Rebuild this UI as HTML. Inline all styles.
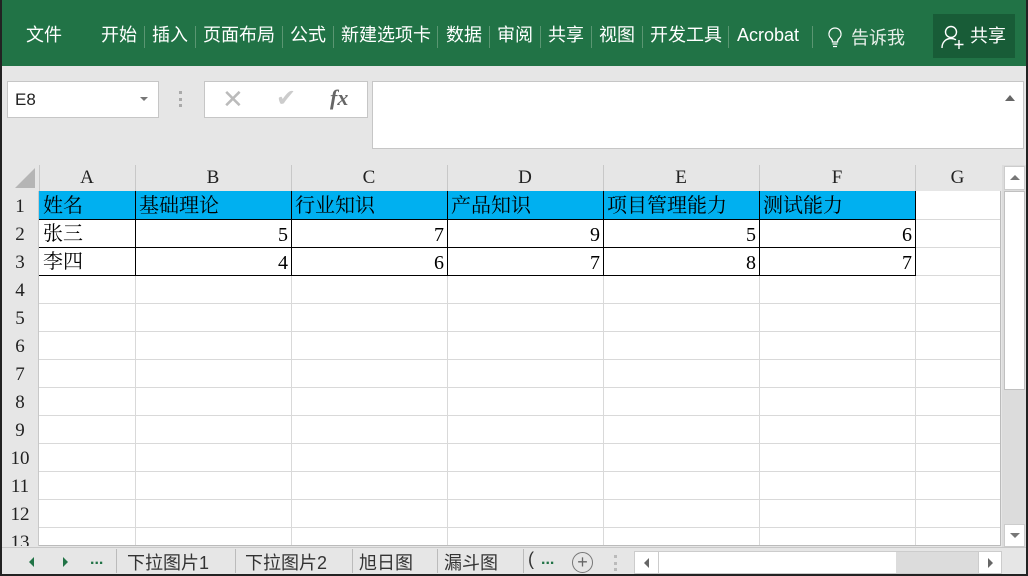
<!DOCTYPE html>
<html><head><meta charset="utf-8"><style>
*{margin:0;padding:0;box-sizing:border-box}
body{width:1028px;height:576px;overflow:hidden;background:#e6e6e6;position:relative;font-family:"Liberation Sans","Microsoft YaHei","Noto Sans CJK SC",sans-serif}
.a{position:absolute}
.rib{left:0;top:0;width:1028px;height:66px;background:#217346}
.tab{top:24px;color:#fff;font-size:18px;line-height:22px;white-space:nowrap}
.sep{top:26px;width:1px;height:22px;background:#5a9672}
.cell{position:absolute;font-family:"Liberation Serif","Noto Serif CJK SC",serif;font-size:20px;line-height:28px}
.hd{font-family:"Liberation Serif",serif;font-size:19px;color:#222;text-align:center;line-height:28px}
.vl{position:absolute;width:1px;background:#d9d9d9}
.hl{position:absolute;height:1px;background:#d9d9d9}
</style></head><body>
<div class="a" style="left:0;top:0;width:2px;height:576px;background:#222;z-index:5"></div>
<div class="a" style="right:0;top:0;width:2px;height:576px;background:#222;z-index:5"></div>
<div class="a" style="left:0;bottom:0;width:1028px;height:2px;background:#222;z-index:5"></div>
<div class="a rib"></div>
<div class="a tab" style="left:26px">文件</div>
<div class="a tab" style="left:101px">开始</div><div class="a sep" style="left:144px"></div>
<div class="a tab" style="left:152px">插入</div><div class="a sep" style="left:195px"></div>
<div class="a tab" style="left:203px">页面布局</div><div class="a sep" style="left:282px"></div>
<div class="a tab" style="left:290px">公式</div><div class="a sep" style="left:333px"></div>
<div class="a tab" style="left:341px">新建选项卡</div><div class="a sep" style="left:437px"></div>
<div class="a tab" style="left:446px">数据</div><div class="a sep" style="left:489px"></div>
<div class="a tab" style="left:497px">审阅</div><div class="a sep" style="left:540px"></div>
<div class="a tab" style="left:548px">共享</div><div class="a sep" style="left:591px"></div>
<div class="a tab" style="left:599px">视图</div><div class="a sep" style="left:642px"></div>
<div class="a tab" style="left:650px">开发工具</div><div class="a sep" style="left:728px"></div>
<div class="a tab" style="left:737px">Acrobat</div><div class="a sep" style="left:812px"></div>
<svg class="a" style="left:826px;top:26px" width="18" height="24" viewBox="0 0 18 24"><path d="M9 2a6 6 0 0 0-4 10.5c1 1 1.5 2 1.5 3.5h5c0-1.5.5-2.5 1.5-3.5A6 6 0 0 0 9 2z" fill="none" stroke="#fff" stroke-width="1.3"/><path d="M6.5 18h5M7 20.5h4" stroke="#fff" stroke-width="1.3"/></svg>
<div class="a tab" style="left:851px;top:27px;color:#e8f0ea">告诉我</div>
<div class="a" style="left:933px;top:14px;width:82px;height:44px;background:#185c37"></div>
<svg class="a" style="left:940px;top:24px" width="26" height="26" viewBox="0 0 26 26"><circle cx="11" cy="8" r="5.5" fill="none" stroke="#fff" stroke-width="1.4"/><path d="M2 24c0-6 4-9.5 9-9.5 2 0 3.5.5 5 1.3" fill="none" stroke="#fff" stroke-width="1.4"/><path d="M19 16v9M14.5 20.5h9" stroke="#fff" stroke-width="1.4"/></svg>
<div class="a tab" style="left:970px;top:25px">共享</div>

<div class="a" style="left:7px;top:81px;width:152px;height:37px;background:#fff;border:1px solid #c6c6c6"></div>
<div class="a" style="left:15px;top:90px;font-size:17px;color:#222">E8</div>
<div class="a" style="left:140px;top:97px;width:0;height:0;border-left:4px solid transparent;border-right:4px solid transparent;border-top:4px solid #777"></div>
<div class="a" style="left:179px;top:91px;width:3px;height:16px;border-left:3px dotted #aaa"></div>
<div class="a" style="left:204px;top:81px;width:164px;height:37px;background:#fff;border:1px solid #c6c6c6"></div>
<div class="a" style="left:222px;top:84px;font-size:26px;color:#bbb">✕</div>
<div class="a" style="left:276px;top:84px;font-size:24px;color:#ccc">✔</div>
<div class="a" style="left:330px;top:85px;font-size:22px;color:#666;font-family:'Liberation Serif',serif;font-style:italic;font-weight:bold">fx</div>
<div class="a" style="left:372px;top:81px;width:652px;height:68px;background:#fff;border:1px solid #c6c6c6"></div>
<div class="a" style="left:1005px;top:95px;width:0;height:0;border-left:5px solid transparent;border-right:5px solid transparent;border-bottom:6px solid #666"></div>

<!-- header row -->
<div class="a" style="left:2px;top:165px;width:1000px;height:26px;background:#e6e6e6"></div>
<div class="a" style="left:15px;top:168px;width:0;height:0;border-left:20px solid transparent;border-bottom:20px solid #b5b5b5"></div>
<div class="a hd" style="left:39px;top:164px;width:96px">A</div>
<div class="a hd" style="left:135px;top:164px;width:156px">B</div>
<div class="a hd" style="left:291px;top:164px;width:156px">C</div>
<div class="a hd" style="left:447px;top:164px;width:156px">D</div>
<div class="a hd" style="left:603px;top:164px;width:156px">E</div>
<div class="a hd" style="left:759px;top:164px;width:156px">F</div>
<div class="a hd" style="left:915px;top:164px;width:85px">G</div>
<div class="vl" style="left:39px;top:165px;height:26px;background:#c8c8c8"></div>
<div class="vl" style="left:135px;top:165px;height:26px;background:#c8c8c8"></div>
<div class="vl" style="left:291px;top:165px;height:26px;background:#c8c8c8"></div>
<div class="vl" style="left:447px;top:165px;height:26px;background:#c8c8c8"></div>
<div class="vl" style="left:603px;top:165px;height:26px;background:#c8c8c8"></div>
<div class="vl" style="left:759px;top:165px;height:26px;background:#c8c8c8"></div>
<div class="vl" style="left:915px;top:165px;height:26px;background:#c8c8c8"></div>

<!-- grid -->
<div class="a" style="left:39px;top:191px;width:961px;height:355px;background:#fff"></div>
<div class="a" style="left:39px;top:191px;width:876px;height:28px;background:#00b0f0"></div>
<div class="vl" style="left:135px;top:191px;height:355px"></div>
<div class="vl" style="left:291px;top:191px;height:355px"></div>
<div class="vl" style="left:447px;top:191px;height:355px"></div>
<div class="vl" style="left:603px;top:191px;height:355px"></div>
<div class="vl" style="left:759px;top:191px;height:355px"></div>
<div class="vl" style="left:915px;top:191px;height:355px"></div>
<div class="vl" style="left:1000px;top:191px;height:355px;background:#bbb"></div>
<div class="hl" style="left:39px;top:303px;width:961px"></div>
<div class="hl" style="left:39px;top:331px;width:961px"></div>
<div class="hl" style="left:39px;top:359px;width:961px"></div>
<div class="hl" style="left:39px;top:387px;width:961px"></div>
<div class="hl" style="left:39px;top:415px;width:961px"></div>
<div class="hl" style="left:39px;top:443px;width:961px"></div>
<div class="hl" style="left:39px;top:471px;width:961px"></div>
<div class="hl" style="left:39px;top:499px;width:961px"></div>
<div class="hl" style="left:39px;top:527px;width:961px"></div>
<div class="hl" style="left:915px;top:219px;width:85px"></div>
<div class="hl" style="left:915px;top:247px;width:85px"></div>
<div class="hl" style="left:915px;top:275px;width:85px"></div>
<div class="hl" style="left:39px;top:545px;width:961px;background:#bbb"></div>
<!-- black borders table -->
<div class="a" style="left:39px;top:191px;width:877px;height:85px;border-bottom:1px solid #000;border-right:1px solid #000"></div>
<div class="a" style="left:39px;top:219px;width:877px;height:1px;background:#000"></div>
<div class="a" style="left:39px;top:247px;width:877px;height:1px;background:#000"></div>
<div class="a" style="left:135px;top:191px;width:1px;height:85px;background:#000"></div>
<div class="a" style="left:291px;top:191px;width:1px;height:85px;background:#000"></div>
<div class="a" style="left:447px;top:191px;width:1px;height:85px;background:#000"></div>
<div class="a" style="left:603px;top:191px;width:1px;height:85px;background:#000"></div>
<div class="a" style="left:759px;top:191px;width:1px;height:85px;background:#000"></div>

<!-- row headers -->
<div class="a" style="left:2px;top:191px;width:37px;height:355px;background:#e6e6e6;border-right:1px solid #c8c8c8"></div>
<div class="hd a" style="left:2px;top:193px;width:36px">1</div>
<div class="hd a" style="left:2px;top:221px;width:36px">2</div>
<div class="hd a" style="left:2px;top:249px;width:36px">3</div>
<div class="hd a" style="left:2px;top:277px;width:36px">4</div>
<div class="hd a" style="left:2px;top:305px;width:36px">5</div>
<div class="hd a" style="left:2px;top:333px;width:36px">6</div>
<div class="hd a" style="left:2px;top:361px;width:36px">7</div>
<div class="hd a" style="left:2px;top:389px;width:36px">8</div>
<div class="hd a" style="left:2px;top:417px;width:36px">9</div>
<div class="hd a" style="left:2px;top:445px;width:36px">10</div>
<div class="hd a" style="left:2px;top:473px;width:36px">11</div>
<div class="hd a" style="left:2px;top:501px;width:36px">12</div>
<div class="hd a" style="left:2px;top:529px;width:36px;height:17px;overflow:hidden">13</div>

<!-- data -->
<div class="cell" style="left:43px;top:192px">姓名</div>
<div class="cell" style="left:139px;top:192px">基础理论</div>
<div class="cell" style="left:295px;top:192px">行业知识</div>
<div class="cell" style="left:451px;top:192px">产品知识</div>
<div class="cell" style="left:607px;top:192px">项目管理能力</div>
<div class="cell" style="left:763px;top:192px">测试能力</div>
<div class="cell" style="left:43px;top:220px">张三</div>
<div class="cell" style="left:43px;top:248px">李四</div>
<div class="cell" style="left:135px;top:221px;width:153px;text-align:right">5</div>
<div class="cell" style="left:291px;top:221px;width:153px;text-align:right">7</div>
<div class="cell" style="left:447px;top:221px;width:153px;text-align:right">9</div>
<div class="cell" style="left:603px;top:221px;width:153px;text-align:right">5</div>
<div class="cell" style="left:759px;top:221px;width:153px;text-align:right">6</div>
<div class="cell" style="left:135px;top:249px;width:153px;text-align:right">4</div>
<div class="cell" style="left:291px;top:249px;width:153px;text-align:right">6</div>
<div class="cell" style="left:447px;top:249px;width:153px;text-align:right">7</div>
<div class="cell" style="left:603px;top:249px;width:153px;text-align:right">8</div>
<div class="cell" style="left:759px;top:249px;width:153px;text-align:right">7</div>

<!-- vertical scrollbar -->
<div class="a" style="left:1002px;top:165px;width:24px;height:382px;background:#dcdcdc"></div>
<div class="a" style="left:1004px;top:166px;width:21px;height:24px;background:#fff;border:1px solid #ccc"></div>
<div class="a" style="left:1010px;top:175px;width:0;height:0;border-left:5px solid transparent;border-right:5px solid transparent;border-bottom:5px solid #777"></div>
<div class="a" style="left:1004px;top:191px;width:21px;height:199px;background:#fff;border:1px solid #c0c0c0"></div>
<div class="a" style="left:1004px;top:524px;width:21px;height:23px;background:#fff;border:1px solid #ccc"></div>
<div class="a" style="left:1010px;top:533px;width:0;height:0;border-left:5px solid transparent;border-right:5px solid transparent;border-top:5px solid #777"></div>

<!-- sheet tabs -->
<div class="a" style="left:2px;top:547px;width:1024px;height:27px;background:#e6e6e6;border-top:1px solid #c8c8c8"></div>
<div class="a" style="left:29px;top:557px;width:0;height:0;border-top:5px solid transparent;border-bottom:5px solid transparent;border-right:5px solid #217346"></div>
<div class="a" style="left:63px;top:557px;width:0;height:0;border-top:5px solid transparent;border-bottom:5px solid transparent;border-left:5px solid #217346"></div>
<div class="a" style="left:90px;top:551px;font-size:16px;color:#217346;font-weight:bold">...</div>
<div class="a" style="left:116px;top:549px;width:1px;height:24px;background:#bbb"></div>
<div class="a" style="left:127px;top:549px;font-size:18px;color:#333">下拉图片1</div>
<div class="a" style="left:235px;top:549px;width:1px;height:24px;background:#bbb"></div>
<div class="a" style="left:245px;top:549px;font-size:18px;color:#333">下拉图片2</div>
<div class="a" style="left:352px;top:549px;width:1px;height:24px;background:#bbb"></div>
<div class="a" style="left:359px;top:549px;font-size:18px;color:#333">旭日图</div>
<div class="a" style="left:437px;top:549px;width:1px;height:24px;background:#bbb"></div>
<div class="a" style="left:444px;top:549px;font-size:18px;color:#333">漏斗图</div>
<div class="a" style="left:523px;top:549px;width:1px;height:24px;background:#bbb"></div>
<div class="a" style="left:528px;top:549px;font-size:18px;color:#333">(</div>
<div class="a" style="left:541px;top:551px;font-size:16px;color:#217346;font-weight:bold">...</div>
<div class="a" style="left:572px;top:552px;width:21px;height:21px;border:1px solid #777;border-radius:50%;text-align:center;line-height:18px;font-size:18px;color:#666">+</div>
<div class="a" style="left:614px;top:555px;width:3px;height:16px;border-left:3px dotted #bbb"></div>
<div class="a" style="left:634px;top:551px;width:368px;height:23px;background:#fff;border:1px solid #ccc"></div>
<div class="a" style="left:658px;top:551px;width:1px;height:23px;background:#ccc"></div>
<div class="a" style="left:896px;top:552px;width:82px;height:21px;background:#dcdcdc"></div>
<div class="a" style="left:978px;top:551px;width:1px;height:23px;background:#ccc"></div>
<div class="a" style="left:644px;top:558px;width:0;height:0;border-top:5px solid transparent;border-bottom:5px solid transparent;border-right:5px solid #666"></div>
<div class="a" style="left:988px;top:558px;width:0;height:0;border-top:5px solid transparent;border-bottom:5px solid transparent;border-left:5px solid #666"></div>
</body></html>
